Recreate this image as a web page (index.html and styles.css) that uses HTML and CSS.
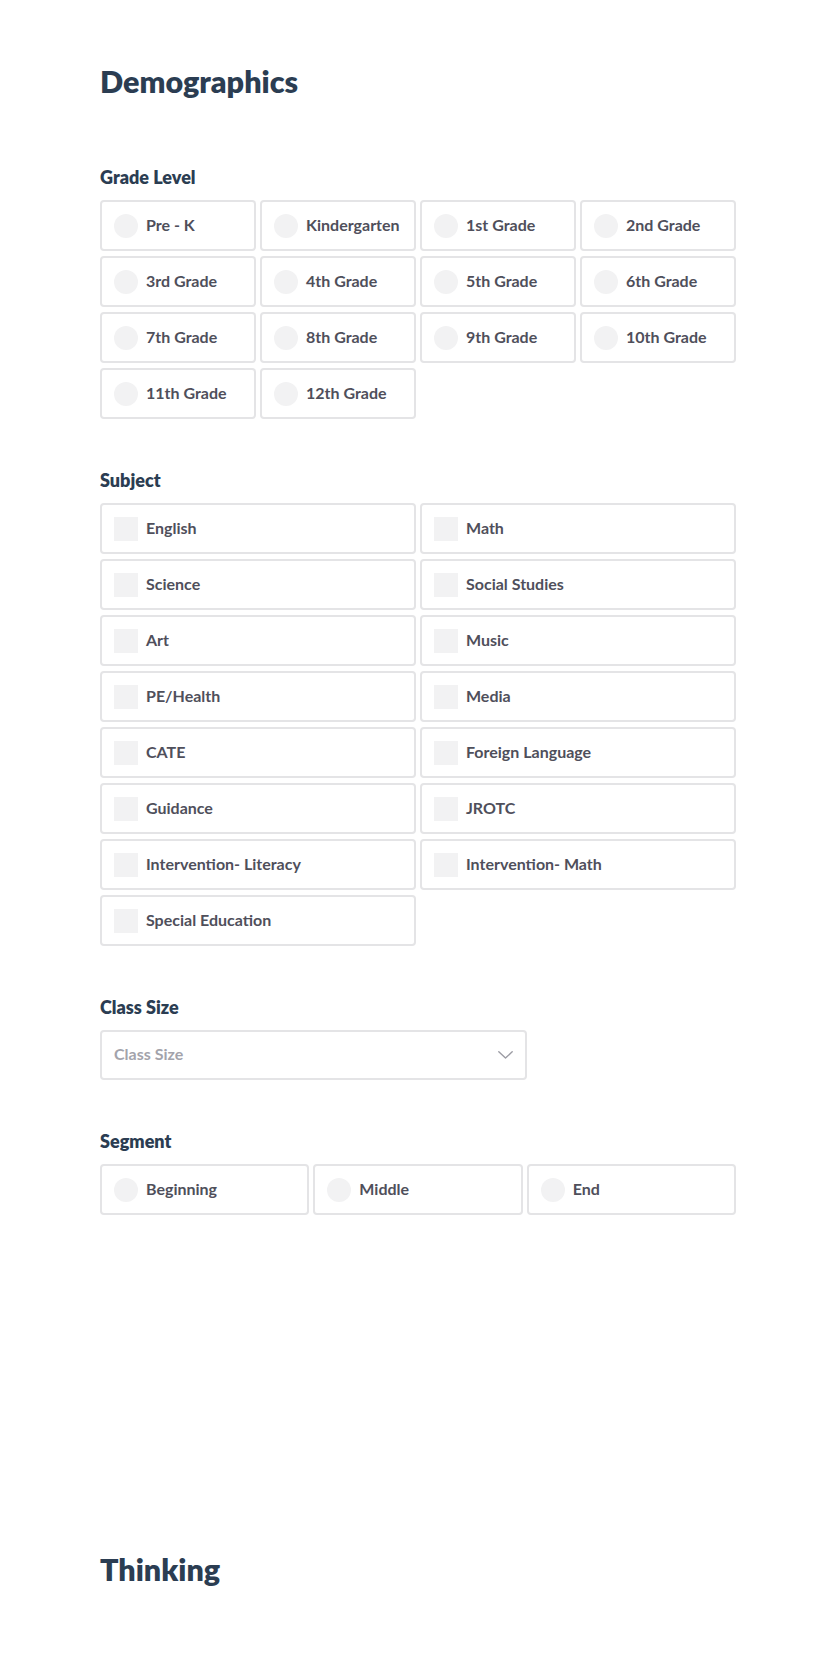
FILE: index.html
```html
<!DOCTYPE html>
<html lang="en">
<head>
<meta charset="utf-8">
<title>Demographics</title>
<link rel="stylesheet" href="styles.css">
</head>
<body>
<div class="page">
  <section class="section section-demo">
    <h1 class="title">Demographics</h1>

    <div class="field field-first">
      <div class="label">Grade Level</div>
      <div class="grid cols-4">
        <label class="opt"><span class="radio"></span><span class="txt">Pre - K</span></label>
        <label class="opt"><span class="radio"></span><span class="txt">Kindergarten</span></label>
        <label class="opt"><span class="radio"></span><span class="txt">1st Grade</span></label>
        <label class="opt"><span class="radio"></span><span class="txt">2nd Grade</span></label>
        <label class="opt"><span class="radio"></span><span class="txt">3rd Grade</span></label>
        <label class="opt"><span class="radio"></span><span class="txt">4th Grade</span></label>
        <label class="opt"><span class="radio"></span><span class="txt">5th Grade</span></label>
        <label class="opt"><span class="radio"></span><span class="txt">6th Grade</span></label>
        <label class="opt"><span class="radio"></span><span class="txt">7th Grade</span></label>
        <label class="opt"><span class="radio"></span><span class="txt">8th Grade</span></label>
        <label class="opt"><span class="radio"></span><span class="txt">9th Grade</span></label>
        <label class="opt"><span class="radio"></span><span class="txt">10th Grade</span></label>
        <label class="opt"><span class="radio"></span><span class="txt">11th Grade</span></label>
        <label class="opt"><span class="radio"></span><span class="txt">12th Grade</span></label>
      </div>
    </div>

    <div class="field">
      <div class="label">Subject</div>
      <div class="grid cols-2">
        <label class="opt"><span class="check"></span><span class="txt">English</span></label>
        <label class="opt"><span class="check"></span><span class="txt">Math</span></label>
        <label class="opt"><span class="check"></span><span class="txt">Science</span></label>
        <label class="opt"><span class="check"></span><span class="txt">Social Studies</span></label>
        <label class="opt"><span class="check"></span><span class="txt">Art</span></label>
        <label class="opt"><span class="check"></span><span class="txt">Music</span></label>
        <label class="opt"><span class="check"></span><span class="txt">PE/Health</span></label>
        <label class="opt"><span class="check"></span><span class="txt">Media</span></label>
        <label class="opt"><span class="check"></span><span class="txt">CATE</span></label>
        <label class="opt"><span class="check"></span><span class="txt">Foreign Language</span></label>
        <label class="opt"><span class="check"></span><span class="txt">Guidance</span></label>
        <label class="opt"><span class="check"></span><span class="txt">JROTC</span></label>
        <label class="opt"><span class="check"></span><span class="txt">Intervention- Literacy</span></label>
        <label class="opt"><span class="check"></span><span class="txt">Intervention- Math</span></label>
        <label class="opt"><span class="check"></span><span class="txt">Special Education</span></label>
      </div>
    </div>

    <div class="field">
      <div class="label">Class Size</div>
      <div class="select">
        <span class="placeholder">Class Size</span>
        <svg class="chevron" width="15" height="8" viewBox="0 0 15 8" aria-hidden="true">
          <path d="M0.8 0.8 L7.5 7 L14.2 0.8" fill="none" stroke="#9c9ca4" stroke-width="1.4" stroke-linecap="round" stroke-linejoin="round"/>
        </svg>
      </div>
    </div>

    <div class="field">
      <div class="label">Segment</div>
      <div class="grid cols-3">
        <label class="opt"><span class="radio"></span><span class="txt">Beginning</span></label>
        <label class="opt"><span class="radio"></span><span class="txt">Middle</span></label>
        <label class="opt"><span class="radio"></span><span class="txt">End</span></label>
      </div>
    </div>
  </section>

  <section class="section section-next">
    <h1 class="title">Thinking</h1>
  </section>
</div>
</body>
</html>
```

FILE: styles.css
```css
html, body {
  margin: 0;
  padding: 0;
  background: #ffffff;
}

body {
  font-family: Lato, "Noto Sans", "Liberation Sans", sans-serif;
  color: #2c3e50;
}

.page {
  margin-left: 100px;
  width: 636px;
}

.section {
  padding-top: 60px;
}

.section-demo {
  padding-top: 61px;
  padding-bottom: 274px;
}

.title {
  margin: 0;
  font-size: 30.5px;
  line-height: 40px;
  font-weight: 800;
  color: #2b3d52;
}

.field {
  margin-top: 49px;
}

.field-first {
  margin-top: 64px;
}

.label {
  font-size: 18px;
  line-height: 24px;
  font-weight: 800;
  color: #2b3d52;
  margin-bottom: 11px;
}

.grid {
  display: grid;
  column-gap: 4px;
  row-gap: 5px;
}

.cols-4 { grid-template-columns: repeat(4, 1fr); }
.cols-3 { grid-template-columns: repeat(3, 1fr); }
.cols-2 { grid-template-columns: repeat(2, 1fr); }

.opt {
  box-sizing: border-box;
  height: 51px;
  display: flex;
  align-items: center;
  gap: 8px;
  padding: 0 12px;
  border: 2px solid #e4e4e6;
  border-radius: 4px;
  background: #ffffff;
}

.radio {
  flex: none;
  width: 24px;
  height: 24px;
  border-radius: 50%;
  background: #f2f2f3;
}

.check {
  flex: none;
  width: 24px;
  height: 24px;
  background: #f2f2f3;
}

.txt {
  font-size: 16px;
  line-height: 18px;
  font-weight: 700;
  color: #4f4f5b;
  white-space: nowrap;
  margin-top: -2px;
}

.select {
  box-sizing: border-box;
  width: 427px;
  height: 50px;
  display: flex;
  align-items: center;
  justify-content: space-between;
  padding: 0 12px 0 12px;
  border: 2px solid #e4e4e6;
  border-radius: 4px;
}

.placeholder {
  font-size: 16px;
  line-height: 18px;
  font-weight: 700;
  color: #a3a3ab;
  margin-top: -2px;
}

.chevron {
  display: block;
}
```
